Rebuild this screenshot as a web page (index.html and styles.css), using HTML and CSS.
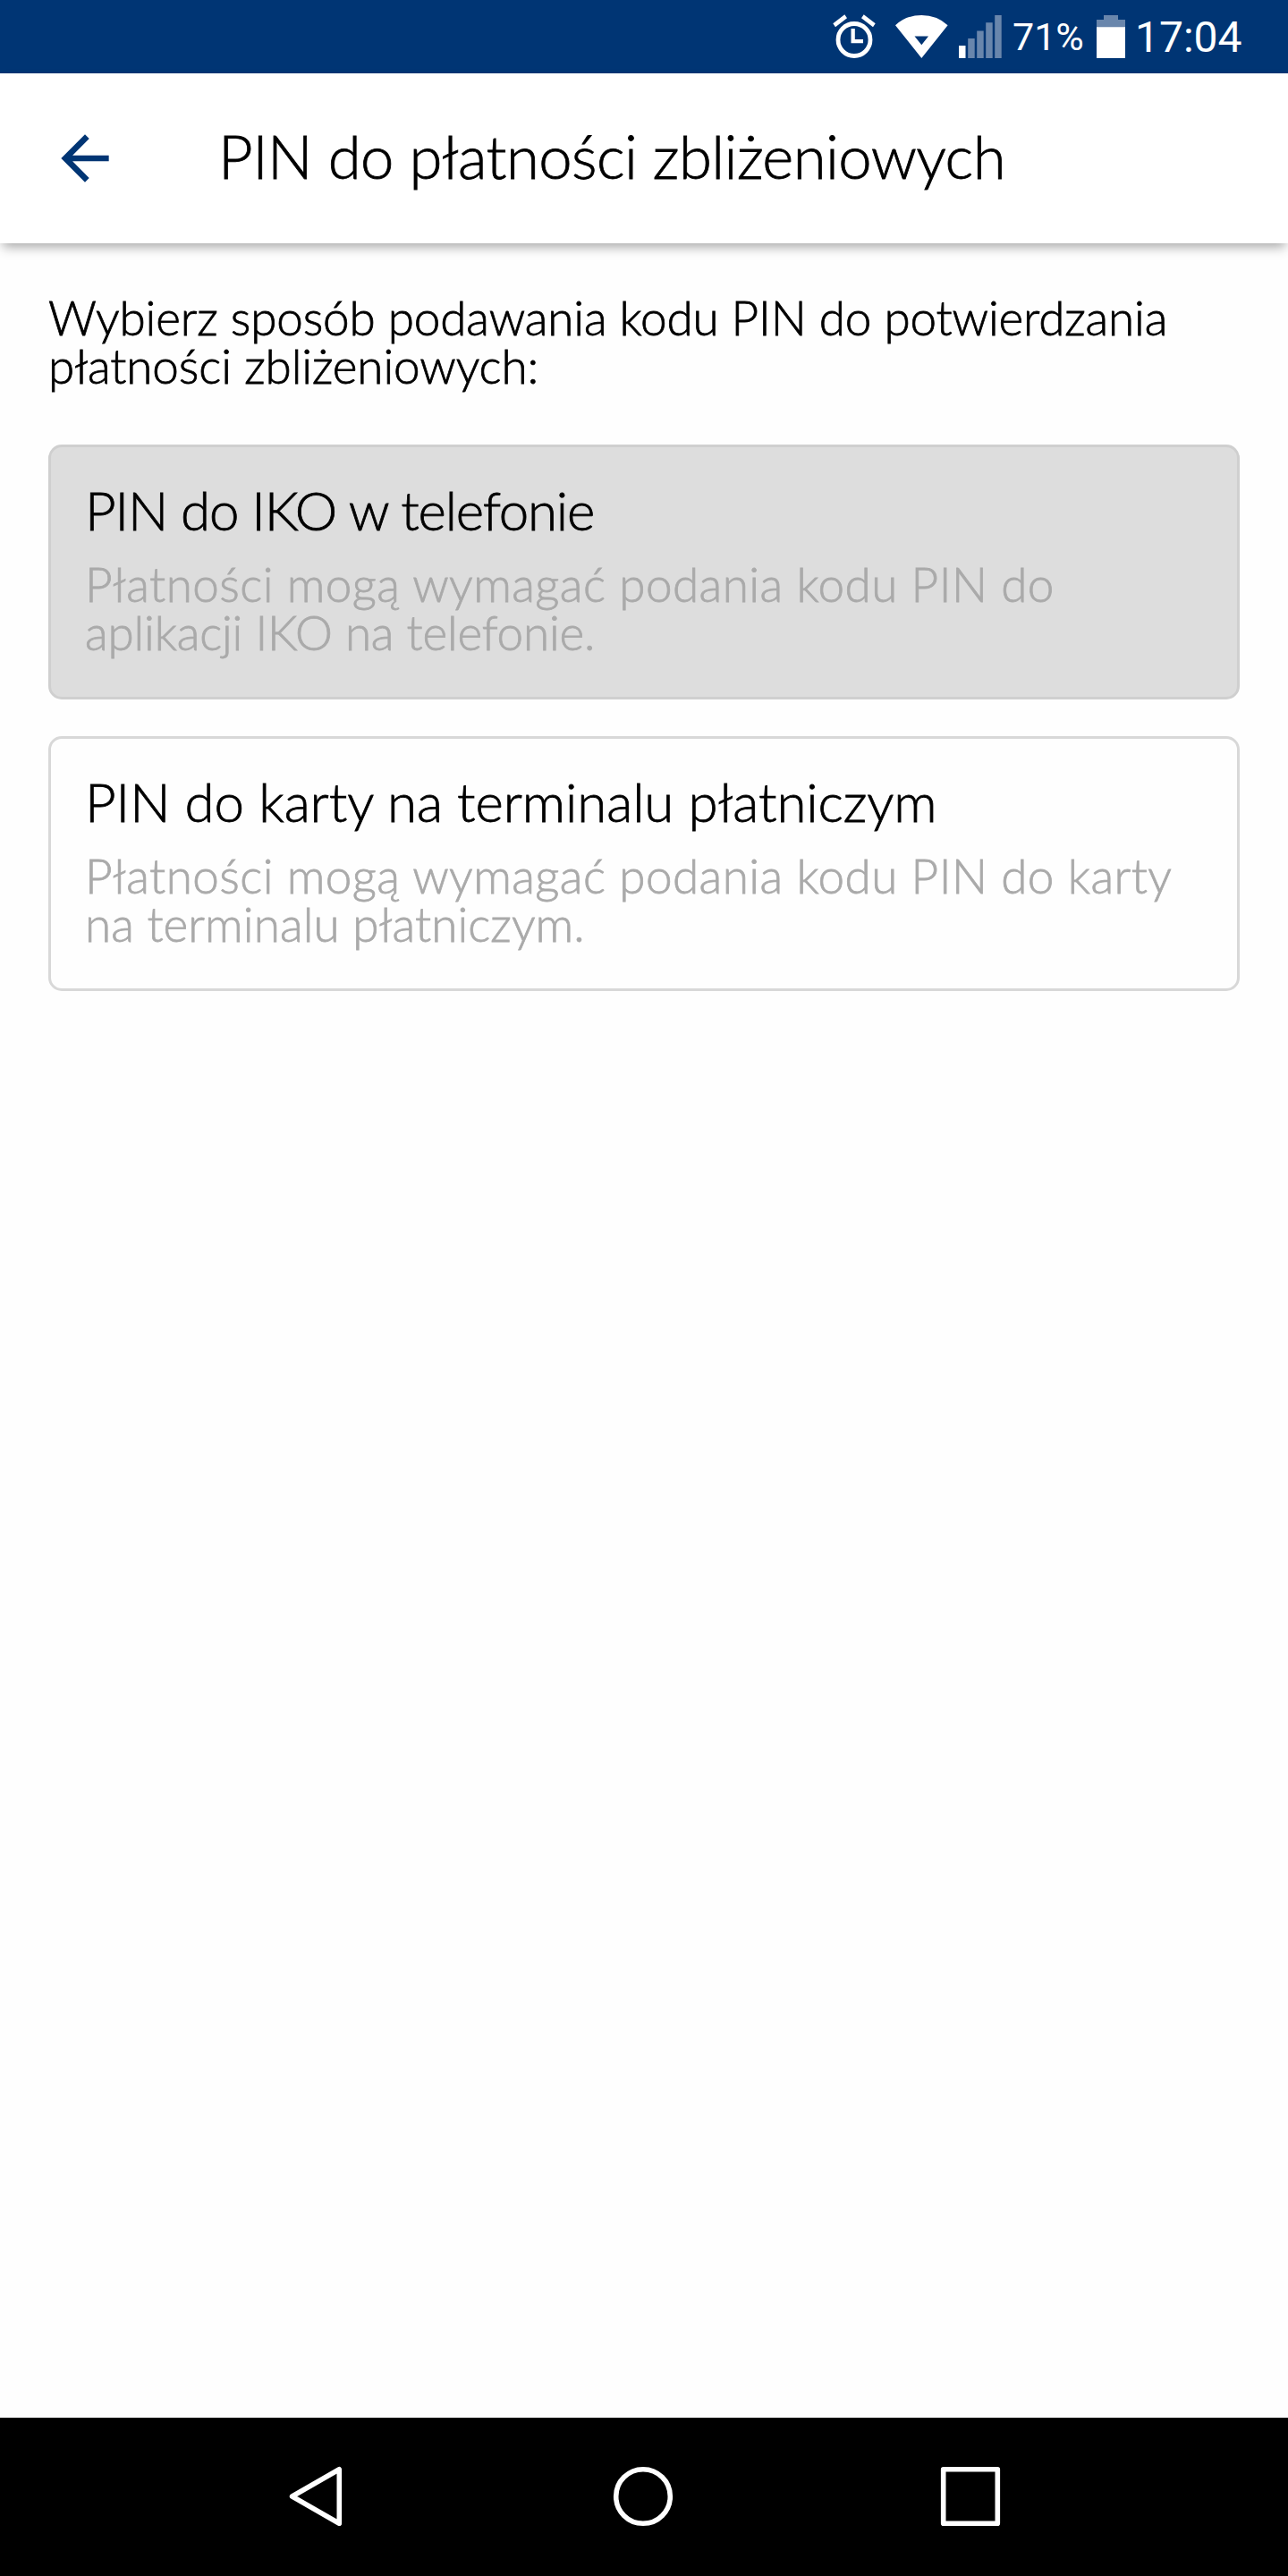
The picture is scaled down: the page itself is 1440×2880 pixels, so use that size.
FILE: index.html
```
<!DOCTYPE html>
<html lang="pl">
  <head>
    <meta charset="UTF-8" />
    <title>PIN do płatności zbliżeniowych</title>
    <meta name="viewport" content="width=device-width, initial-scale=1.0" />
    <link rel="stylesheet" href="styles.css">
  </head>
  <body>
    <div class="status-bar">
      <svg class="alarm-icon" width="48" height="50" viewBox="0 0 48 50">
        <circle cx="24" cy="28.5" r="18" fill="none" stroke="#fff" stroke-width="4.8" />
        <path d="M0.3 10.3L13.3 0.3L16 4.3L3 14.3zM47.7 10.3L34.7 0.3L32 4.3L45 14.3z" fill="#fff" />
        <path d="M20.5 16h4.3v12h9.2v4.2H20.5z" fill="#fff" />
      </svg>
      <svg class="wifi-icon" width="59" height="48" viewBox="0 0 59 48">
        <path fill="#fff" fill-rule="evenodd" d="M0 11.3Q12 0 29.3 0T58.6 11.3L29.3 48zM21.5 23.4H37L29.3 33.3z" />
      </svg>
      <svg class="signal-icon" width="48" height="48" viewBox="0 0 48 48">
        <rect x="0" y="34" width="7.5" height="14" fill="#fff" />
        <path fill="#6986ac" d="M10.2 26h7.5v22h-7.5zM20.2 17.5h7.5v30.5h-7.5zM30.2 8.3h7.5v39.7h-7.5zM40.2 0h7.5v48h-7.5z" />
      </svg>
      <span class="battery-level">71%</span>
      <svg class="battery-icon" width="32" height="48" viewBox="0 0 32 48">
        <path fill="#6986ac" d="M8 0h16v5h8v8.5H0V5h8z" />
        <rect y="13.2" width="32" height="34.8" fill="#fff" />
      </svg>
      <span class="clock">17:04</span>
    </div>

    <header class="toolbar">
      <svg class="back-icon" width="80" height="80" viewBox="0 0 24 24">
        <path fill="#003574" d="M20 11H7.83l5.59-5.59L12 4l-8 8 8 8 1.41-1.41L7.83 13H20z" />
      </svg>
      <h1>PIN do płatności zbliżeniowych</h1>
    </header>

    <main class="content">
      <p class="intro">
        <span class="line intro-1">Wybierz sposób podawania kodu PIN do potwierdzania</span>
        <span class="line intro-2">płatności zbliżeniowych:</span>
      </p>

      <div class="option selected">
        <h2 class="phone-title">PIN do IKO w telefonie</h2>
        <p>
          <span class="line phone-1">Płatności mogą wymagać podania kodu PIN do</span>
          <span class="line phone-2">aplikacji IKO na telefonie.</span>
        </p>
      </div>

      <div class="option">
        <h2 class="card-title">PIN do karty na terminalu płatniczym</h2>
        <p>
          <span class="line card-1">Płatności mogą wymagać podania kodu PIN do karty</span>
          <span class="line card-2">na terminalu płatniczym.</span>
        </p>
      </div>
    </main>

    <!-- System navigation -->
    <nav class="nav-bar">
      <svg width="68" height="68" viewBox="0 0 68 68">
        <path d="M7.6 34L60.3 3.8V64.2z" />
      </svg>
      <svg width="68" height="68" viewBox="0 0 68 68">
        <circle cx="34" cy="34" r="30.3" />
      </svg>
      <svg width="68" height="68" viewBox="0 0 68 68">
        <rect x="3.7" y="3.7" width="60.6" height="60.6" />
      </svg>
    </nav>
  </body>
</html>
```
FILE: styles.css
```
/* Base styles */
body {
  display: flex;
  flex-direction: column;
  height: 2880px;
  margin: 0;
  background-color: #fefefe;
  color: #000;
  font-family: Lato, sans-serif;
  font-weight: 300;
}

h1,
h2,
p {
  margin: 0;
  font-weight: 300;
  -webkit-text-stroke: 0.8px;
}

svg {
  display: block;
  flex: none;
}

/* Status bar */
.status-bar {
  display: flex;
  justify-content: flex-end;
  align-items: center;
  box-sizing: border-box;
  height: 82px;
  padding-right: 50px;
  background-color: #003574;
  color: #fff;
  font-family: Roboto, sans-serif;
  font-weight: 400;
}

.wifi-icon {
  margin-left: 22px;
}

.signal-icon {
  margin-left: 12px;
}

.battery-level {
  width: 84px;
  margin-left: 12px;
  font-size: 43px;
  white-space: nowrap;
}

.battery-icon {
  margin-left: 10px;
}

.clock {
  width: 121px;
  margin-left: 11px;
  font-size: 48px;
  white-space: nowrap;
}

/* Toolbar */
.toolbar {
  display: flex;
  align-items: center;
  height: 190px;
  padding-left: 55px;
  background-color: #fff;
  box-shadow: 0 7px 12px -3px rgba(0, 0, 0, 0.35);
}

.toolbar h1 {
  margin: 0 0 7px 109px;
  font-size: 67px;
  line-height: 80px;
  letter-spacing: -0.58px;
  white-space: nowrap;
}

/* Content */
.content {
  flex: 1;
  padding: 56px 54px 0;
}

.line {
  display: block;
  white-space: nowrap;
}

.intro {
  margin-bottom: 61px;
  font-size: 53px;
  line-height: 54px;
}

.intro-1 {
  letter-spacing: -0.16px;
}

.intro-2 {
  letter-spacing: -0.1px;
}

.option {
  box-sizing: border-box;
  height: 285px;
  margin-bottom: 41px;
  padding: 34px 40px 0 38px;
  border: 3px solid #d8d8d8;
  border-radius: 15px;
}

.option.selected {
  background-color: #ddd;
  border-color: #cfcfcf;
}

.option h2 {
  font-size: 60px;
  line-height: 72px;
  white-space: nowrap;
}

.phone-title {
  letter-spacing: -1.2px;
}

.card-title {
  letter-spacing: -0.08px;
}

.option p {
  margin-top: 20px;
  color: #aaa;
  font-size: 53px;
  line-height: 54px;
}

.phone-1,
.card-1 {
  letter-spacing: 0.45px;
}

.phone-2 {
  letter-spacing: -0.18px;
}

.card-2 {
  letter-spacing: 0.08px;
}

/* Navigation bar */
.nav-bar {
  display: flex;
  justify-content: center;
  align-items: center;
  gap: 298px;
  box-sizing: border-box;
  height: 177px;
  padding: 0 2px 1px 0;
  background-color: #000;
}

.nav-bar svg {
  fill: none;
  stroke: #fff;
  stroke-width: 5.6;
  stroke-linejoin: round;
}
```
